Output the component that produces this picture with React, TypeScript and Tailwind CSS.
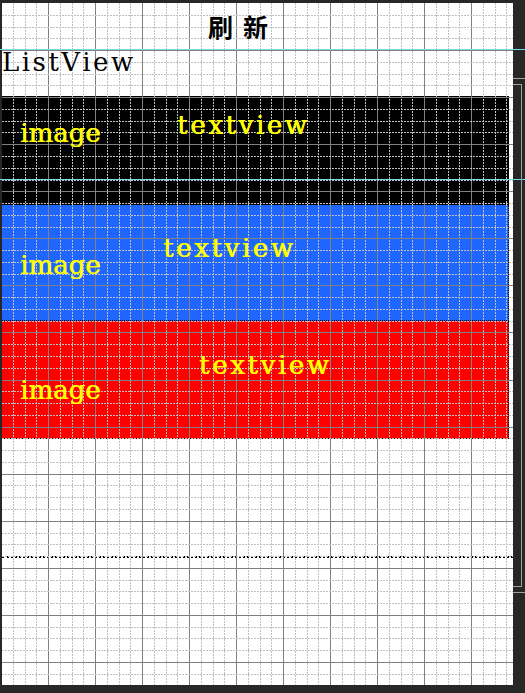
import React from 'react';

const W = 511;
const H = 682;

// grid of the designer canvas: major lines every ~47px, dotted quarter lines between
const Grid: React.FC = () => {
  const lines: React.ReactNode[] = [];
  for (let k = 0; k < 12; k++) {
    const base = -1 + 47 * k;
    lines.push(<line key={`vm${k}`} x1={base + 0.5} y1={0} x2={base + 0.5} y2={H} stroke="#808080" />);
    [1, 2, 3].forEach((i) => {
      const x = Math.round(base + 11.75 * i) + 0.5;
      lines.push(
        <line key={`vd${k}-${i}`} x1={x} y1={0} x2={x} y2={H} stroke="#c0c0c0" strokeDasharray="2 1" />
      );
    });
  }
  for (let k = 0; k < 15; k++) {
    const base = 47.07 * k;
    if (k > 0) {
      const y = Math.round(base) + 0.5;
      lines.push(<line key={`hm${k}`} x1={0} y1={y} x2={W} y2={y} stroke="#808080" />);
    }
    [1, 2, 3].forEach((i) => {
      const y = Math.round(base + 11.77 * i) + 0.5;
      lines.push(
        <line key={`hd${k}-${i}`} x1={0} y1={y} x2={W} y2={y} stroke="#c0c0c0" strokeDasharray="2 1" />
      );
    });
  }
  return (
    <svg
      className="absolute inset-0 pointer-events-none"
      width={W}
      height={H}
      shapeRendering="crispEdges"
    >
      {lines}
    </svg>
  );
};

const label =
  "relative z-10 col-start-1 row-start-1 self-start justify-self-start text-[26px] leading-[22px] text-[#ffff00] [text-shadow:0.6px_0_0_#ffff00] font-['DejaVu_Serif',serif]";

export default function App() {
  return (
    <div className="relative w-[525px] h-[693px] overflow-hidden bg-[#272727] pt-[3px] pl-[2px]">
      <div className="relative w-[511px] h-[682px] bg-white">
        <div className="h-[48px] border-b border-black flex items-center pl-[206px]">
          <span className="relative z-10 text-[25px] font-bold tracking-[10px] text-black font-['Noto_Sans_CJK_SC',sans-serif]">
            刷新
          </span>
        </div>
        <div className="h-[45px]">
          <span className="relative z-10 block text-[26px] leading-[22px] tracking-[2.5px] text-black font-['DejaVu_Serif',serif]">
            ListView
          </span>
        </div>

        <div className="w-[507px] h-[109px] bg-black border-r border-dotted border-black grid">
          <span className={`${label} ml-[18px] mt-[26px]`}>image</span>
          <span className={`${label} ml-[175px] mt-[18px] tracking-[2.6px]`}>textview</span>
        </div>
        <div className="w-[507px] h-[116px] bg-[#1f66ff] border-r border-b border-dotted border-black grid">
          <span className={`${label} ml-[18px] mt-[49px]`}>image</span>
          <span className={`${label} ml-[161px] mt-[32px] tracking-[2.6px]`}>textview</span>
        </div>
        <div className="w-[507px] h-[118px] bg-[#ff0000] border-r border-b border-dotted border-black grid">
          <span className={`${label} ml-[18px] mt-[58px]`}>image</span>
          <span className={`${label} ml-[197px] mt-[33px] tracking-[2.6px]`}>textview</span>
        </div>

        <div className="h-[117px]" />
        <div className="border-t-2 border-dotted border-black" />

        <Grid />
      </div>

      {/* guide lines and selection brackets outside the canvas */}
      <div className="absolute left-0 top-[49px] w-[525px] h-px bg-[#6fdfe6]" />
      <div className="absolute left-0 top-[179px] w-[525px] h-px bg-[#6fdfe6]" />
      <div className="absolute left-[513px] top-[78px] w-[14px] h-[515px] border border-l-0 border-[#a0a0a0]" />
      <div className="absolute left-[513px] top-[84px] w-[9px] h-[503px] border border-l-0 border-[#a0a0a0]" />
    </div>
  );
}
